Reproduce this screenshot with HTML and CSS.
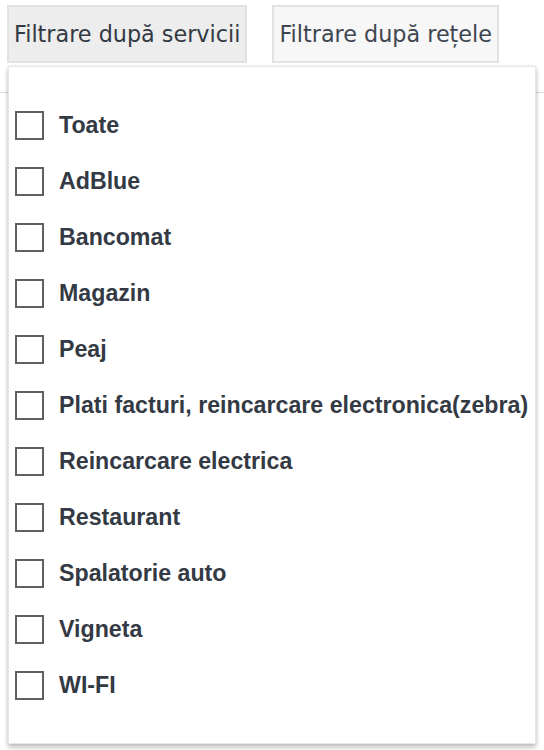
FILE: index.html
```html
<!DOCTYPE html>
<html lang="ro">
<head>
<meta charset="utf-8">
<link rel="stylesheet" href="styles.css">
</head>
<body>
<div class="filters">
  <div class="tabs">
    <button class="tab tab-active">Filtrare după servicii</button>
    <button class="tab">Filtrare după rețele</button>
  </div>
  <div class="dropdown">
    <label class="row"><span class="box"></span><span class="lbl">Toate</span></label>
    <label class="row"><span class="box"></span><span class="lbl">AdBlue</span></label>
    <label class="row"><span class="box"></span><span class="lbl">Bancomat</span></label>
    <label class="row"><span class="box"></span><span class="lbl">Magazin</span></label>
    <label class="row"><span class="box"></span><span class="lbl">Peaj</span></label>
    <label class="row"><span class="box"></span><span class="lbl">Plati facturi, reincarcare electronica(zebra)</span></label>
    <label class="row"><span class="box"></span><span class="lbl">Reincarcare electrica</span></label>
    <label class="row"><span class="box"></span><span class="lbl">Restaurant</span></label>
    <label class="row"><span class="box"></span><span class="lbl">Spalatorie auto</span></label>
    <label class="row"><span class="box"></span><span class="lbl">Vigneta</span></label>
    <label class="row"><span class="box"></span><span class="lbl">WI-FI</span></label>
  </div>
</div>
</body>
</html>
```
FILE: styles.css
```css
html, body {
  margin: 0;
  padding: 0;
  background: #ffffff;
}
.filters {
  position: relative;
  height: 750px;
  font-family: "Liberation Sans", Arial, sans-serif;
}
.tabs {
  display: flex;
  gap: 25px;
  padding: 5px 0 0 7px;
  border-bottom: 1px solid #dcdcdc;
  box-sizing: border-box;
  height: 93px;
}
.tab {
  height: 58px;
  padding: 0 5px;
  border: 2px solid #e2e2e2;
  background: #f7f7f7;
  color: #3f4650;
  font-family: "DejaVu Sans", Verdana, sans-serif;
  font-size: 22.3px;
  cursor: pointer;
}
.tab-active {
  background: #ededed;
  color: #333a44;
}
.dropdown {
  position: absolute;
  top: 66px;
  left: 8px;
  width: 528px;
  height: 678px;
  box-sizing: border-box;
  background: #fff;
  border: 1px solid #e6e6e6;
  box-shadow: 0 4px 5px rgba(0,0,0,0.22), 0 0 3px rgba(0,0,0,0.12);
  padding: 30px 0 0 6px;
  display: flex;
  flex-direction: column;
}
.row {
  display: flex;
  align-items: center;
  height: 56px;
  gap: 15px;
}
.box {
  width: 29px;
  height: 29px;
  box-sizing: border-box;
  border: 2px solid #606060;
  background: #fff;
  flex: none;
}
.lbl {
  font-size: 23.2px;
  font-weight: bold;
  color: #343a44;
}
```
